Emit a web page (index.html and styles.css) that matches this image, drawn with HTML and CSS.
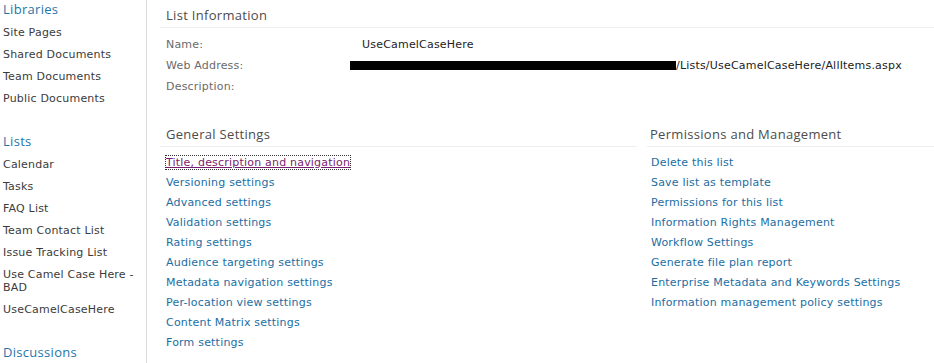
FILE: index.html
```html
<!DOCTYPE html>
<html lang="en">
<head>
    <meta charset="UTF-8">
    <title>List Settings</title>
    <link rel="stylesheet" href="styles.css">
</head>
<body>
    <div class="page">
        <div class="quicklaunch">
            <div class="navGroup">
                <div class="navHeader">Libraries</div>
                <a class="navItem" href="#">Site Pages</a>
                <a class="navItem" href="#">Shared Documents</a>
                <a class="navItem" href="#">Team Documents</a>
                <a class="navItem" href="#">Public Documents</a>
            </div>
            <div class="navGroup">
                <div class="navHeader">Lists</div>
                <a class="navItem" href="#">Calendar</a>
                <a class="navItem" href="#">Tasks</a>
                <a class="navItem" href="#">FAQ List</a>
                <a class="navItem" href="#">Team Contact List</a>
                <a class="navItem" href="#">Issue Tracking List</a>
                <a class="navItem" href="#">Use Camel Case Here - BAD</a>
                <a class="navItem" href="#">UseCamelCaseHere</a>
            </div>
            <div class="navGroup">
                <div class="navHeader">Discussions</div>
            </div>
        </div>
        <div class="main">
            <div class="section">
                <h3 class="sectionTitle">List Information</h3>
                <div class="infoRow">
                    <span class="infoLabel">Name:</span>
                    <span class="infoValue">UseCamelCaseHere</span>
                </div>
                <div class="infoRow">
                    <span class="infoLabel">Web Address:</span>
                    <span class="infoValue"><span class="redacted"></span>/Lists/UseCamelCaseHere/AllItems.aspx</span>
                </div>
                <div class="infoRow">
                    <span class="infoLabel">Description:</span>
                    <span class="infoValue"></span>
                </div>
            </div>
            <div class="columns">
                <div class="column left">
                    <h3 class="sectionTitle">General Settings</h3>
                    <a class="link visited" href="#">Title, description and navigation</a>
                    <a class="link" href="#">Versioning settings</a>
                    <a class="link" href="#">Advanced settings</a>
                    <a class="link" href="#">Validation settings</a>
                    <a class="link" href="#">Rating settings</a>
                    <a class="link" href="#">Audience targeting settings</a>
                    <a class="link" href="#">Metadata navigation settings</a>
                    <a class="link" href="#">Per-location view settings</a>
                    <a class="link" href="#">Content Matrix settings</a>
                    <a class="link" href="#">Form settings</a>
                </div>
                <div class="column right">
                    <h3 class="sectionTitle">Permissions and Management</h3>
                    <a class="link" href="#">Delete this list</a>
                    <a class="link" href="#">Save list as template</a>
                    <a class="link" href="#">Permissions for this list</a>
                    <a class="link" href="#">Information Rights Management</a>
                    <a class="link" href="#">Workflow Settings</a>
                    <a class="link" href="#">Generate file plan report</a>
                    <a class="link" href="#">Enterprise Metadata and Keywords Settings</a>
                    <a class="link" href="#">Information management policy settings</a>
                </div>
            </div>
        </div>
    </div>
</body>
</html>
```

FILE: styles.css
```css
body{
    margin: 0;
    background: #fff;
    font-family: "DejaVu Sans", Verdana, sans-serif;
    font-size: 11px;
    letter-spacing: 0.2px;
    color: #3b3b3b;
    overflow: hidden;
}
a{
    text-decoration: none;
}
.page{
    display: flex;
    height: 363px;
}
.quicklaunch{
    width: 147px;
    border-right: 1px solid #dcdcdc;
    padding-left: 3px;
    box-sizing: border-box;
}
.navGroup{
    display: flex;
    flex-direction: column;
    margin-bottom: 23px;
}
.navHeader{
    font-family: "Open Sans", "Segoe UI", sans-serif;
    font-size: 13px;
    letter-spacing: 0.3px;
    color: #1f76a9;
    line-height: 18px;
    margin-bottom: 3px;
}
.navItem{
    color: #3b3b3b;
    line-height: 13px;
    padding: 5px 0 4px;
}
.main{
    flex: 1;
    padding-left: 13px;
}
.sectionTitle{
    margin: 0;
    font-family: "Open Sans", "Segoe UI", sans-serif;
    font-weight: normal;
    font-size: 13px;
    letter-spacing: 0.3px;
    color: #4c4c4c;
    padding: 6px 6px 3px;
    border-bottom: 1px solid #eeeeee;
    line-height: 18px;
}
.section{
    padding-bottom: 18px;
}
.section .sectionTitle{
    margin-bottom: 10px;
}
.infoRow{
    display: flex;
    height: 21px;
    line-height: 13px;
    padding-left: 6px;
}
.infoLabel{
    width: 196px;
    color: #6a6a6a;
}
.infoValue{
    color: #222;
}
.redacted{
    display: inline-block;
    width: 326px;
    height: 9px;
    background: #000;
    margin-left: -12px;
    vertical-align: -1px;
}
.columns{
    display: flex;
}
.column{
    display: flex;
    flex-direction: column;
    align-items: flex-start;
}
.column .sectionTitle{
    align-self: stretch;
    margin-bottom: 6px;
}
.left{
    width: 477px;
}
.right{
    flex: 1;
    margin-left: 10px;
}
.right .sectionTitle{
    padding-left: 3px;
}
.right .link{
    margin-left: 4px;
}
.link{
    color: #1b6ea3;
    line-height: 13px;
    margin: 3px 0 4px 6px;
}
.visited{
    color: #7a1c6e;
    text-decoration: underline;
    outline: 1px dotted #333;
}
```
